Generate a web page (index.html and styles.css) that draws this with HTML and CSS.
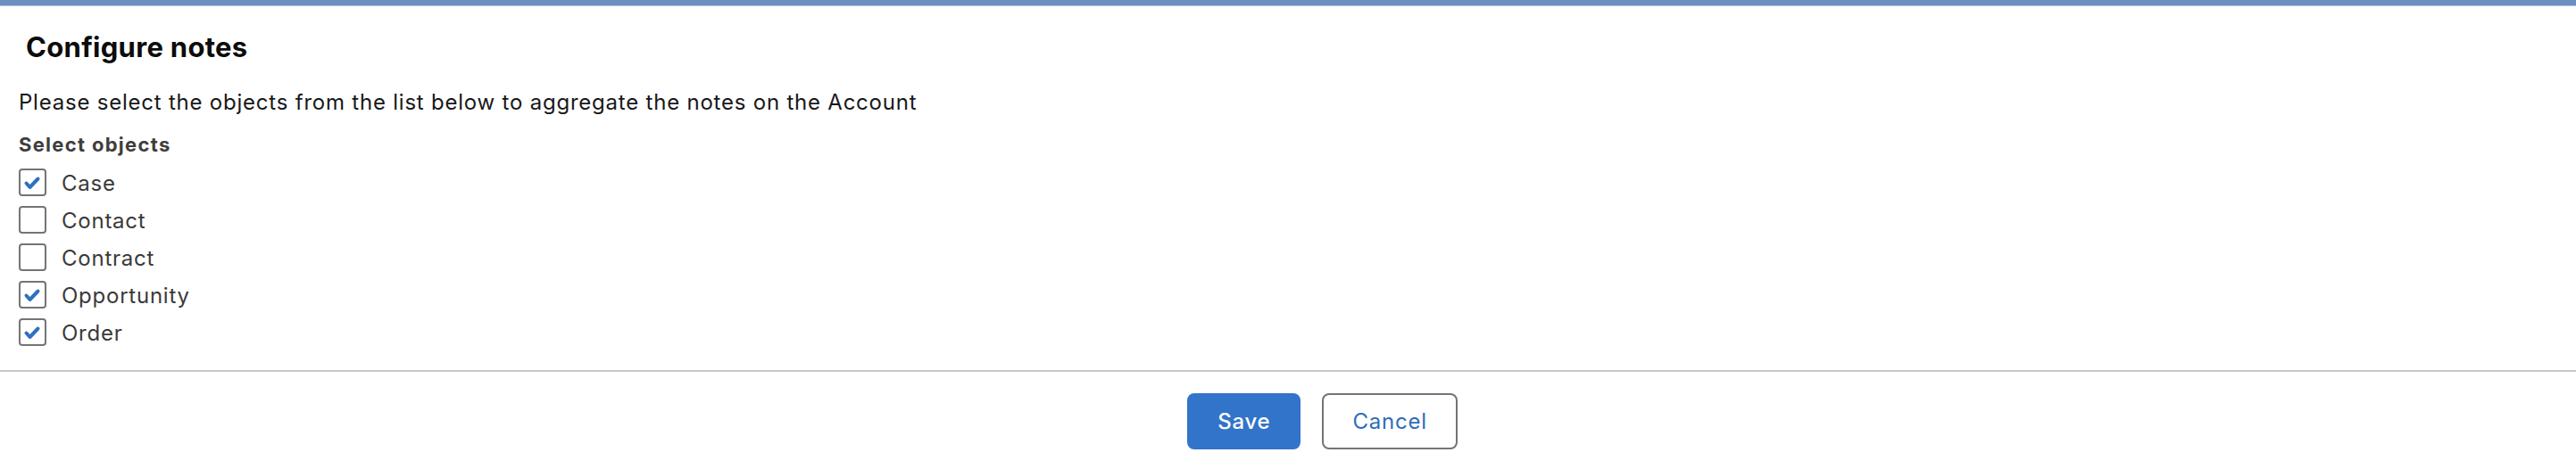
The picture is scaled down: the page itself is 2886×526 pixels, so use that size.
FILE: index.html
```html
<!DOCTYPE html>
<html lang="en">
<head>
<meta charset="utf-8">
<title>Configure notes</title>
<link rel="stylesheet" href="styles.css">
</head>
<body>
<div class="topbar"></div>
<main class="panel">
  <h1 class="title">Configure notes</h1>
  <p class="intro">Please select the objects from the list below to aggregate the notes on the Account</p>
  <div class="group-label">Select objects</div>
  <ul class="options">
    <li class="option"><span class="box checked"><svg viewBox="0 0 27 27" class="tick"><polyline points="6.5,14.5 10.5,19 19.5,9.5"/></svg></span><span class="label">Case</span></li>
    <li class="option"><span class="box"></span><span class="label">Contact</span></li>
    <li class="option"><span class="box"></span><span class="label">Contract</span></li>
    <li class="option"><span class="box checked"><svg viewBox="0 0 27 27" class="tick"><polyline points="6.5,14.5 10.5,19 19.5,9.5"/></svg></span><span class="label">Opportunity</span></li>
    <li class="option"><span class="box checked"><svg viewBox="0 0 27 27" class="tick"><polyline points="6.5,14.5 10.5,19 19.5,9.5"/></svg></span><span class="label">Order</span></li>
  </ul>
</main>
<footer class="footer">
  <button class="btn btn-brand">Save</button>
  <button class="btn btn-neutral">Cancel</button>
</footer>
</body>
</html>
```
FILE: styles.css
```css
html, body {
  margin: 0;
  padding: 0;
  background: #ffffff;
}
body {
  font-family: Inter, "Liberation Sans", Arial, sans-serif;
  color: #181818;
  width: 2886px;
  height: 526px;
  overflow: hidden;
}
.topbar {
  height: 6px;
  background: #6c8fc0;
  border-bottom: 1px solid #b4c6df;
}
.panel {
  padding: 0 0 0 21px;
}
.title {
  margin: 28px 0 0 8px;
  font-size: 31px;
  line-height: 36px;
  font-weight: 700;
  color: #0c0c0c;
  letter-spacing: 0.3px;
}
.intro {
  margin: 28px 0 0 0;
  font-size: 24px;
  line-height: 32px;
  font-weight: 400;
  color: #181818;
  letter-spacing: 0.78px;
}
.group-label {
  margin-top: 17px;
  font-size: 22px;
  line-height: 29px;
  font-weight: 700;
  color: #3e3e3c;
  letter-spacing: 1.3px;
}
.options {
  list-style: none;
  margin: 6px 0 0 0;
  padding: 0;
}
.option {
  height: 42px;
  display: flex;
  align-items: center;
}
.box {
  box-sizing: border-box;
  width: 31px;
  height: 31px;
  border: 2px solid #747474;
  border-radius: 4px;
  background: #fff;
  display: flex;
}
.tick {
  width: 27px;
  height: 27px;
  fill: none;
  stroke: #2f6fc2;
  stroke-width: 4;
  stroke-linecap: round;
  stroke-linejoin: round;
}
.label {
  margin-left: 17px;
  padding-top: 3px;
  font-size: 24px;
  line-height: 32px;
  color: #3a3a3a;
  letter-spacing: 0.76px;
}
.footer {
  margin-top: 22px;
  border-top: 2px solid #c9c9c9;
  padding: 24px 0 0 77px;
  display: flex;
  justify-content: center;
  gap: 24px;
}
.btn {
  box-sizing: border-box;
  height: 63px;
  padding: 0 32px;
  border-radius: 8px;
  border: 2px solid #747474;
  font-family: Inter, "Liberation Sans", Arial, sans-serif;
  font-size: 24px;
  line-height: 59px;
  font-weight: 400;
  letter-spacing: 0.76px;
  background: #fff;
  cursor: pointer;
}
.btn-brand {
  background: #3274c9;
  border-color: #3274c9;
  color: #ffffff;
  font-weight: 500;
}
.btn-neutral {
  color: #2f6db9;
}
```
